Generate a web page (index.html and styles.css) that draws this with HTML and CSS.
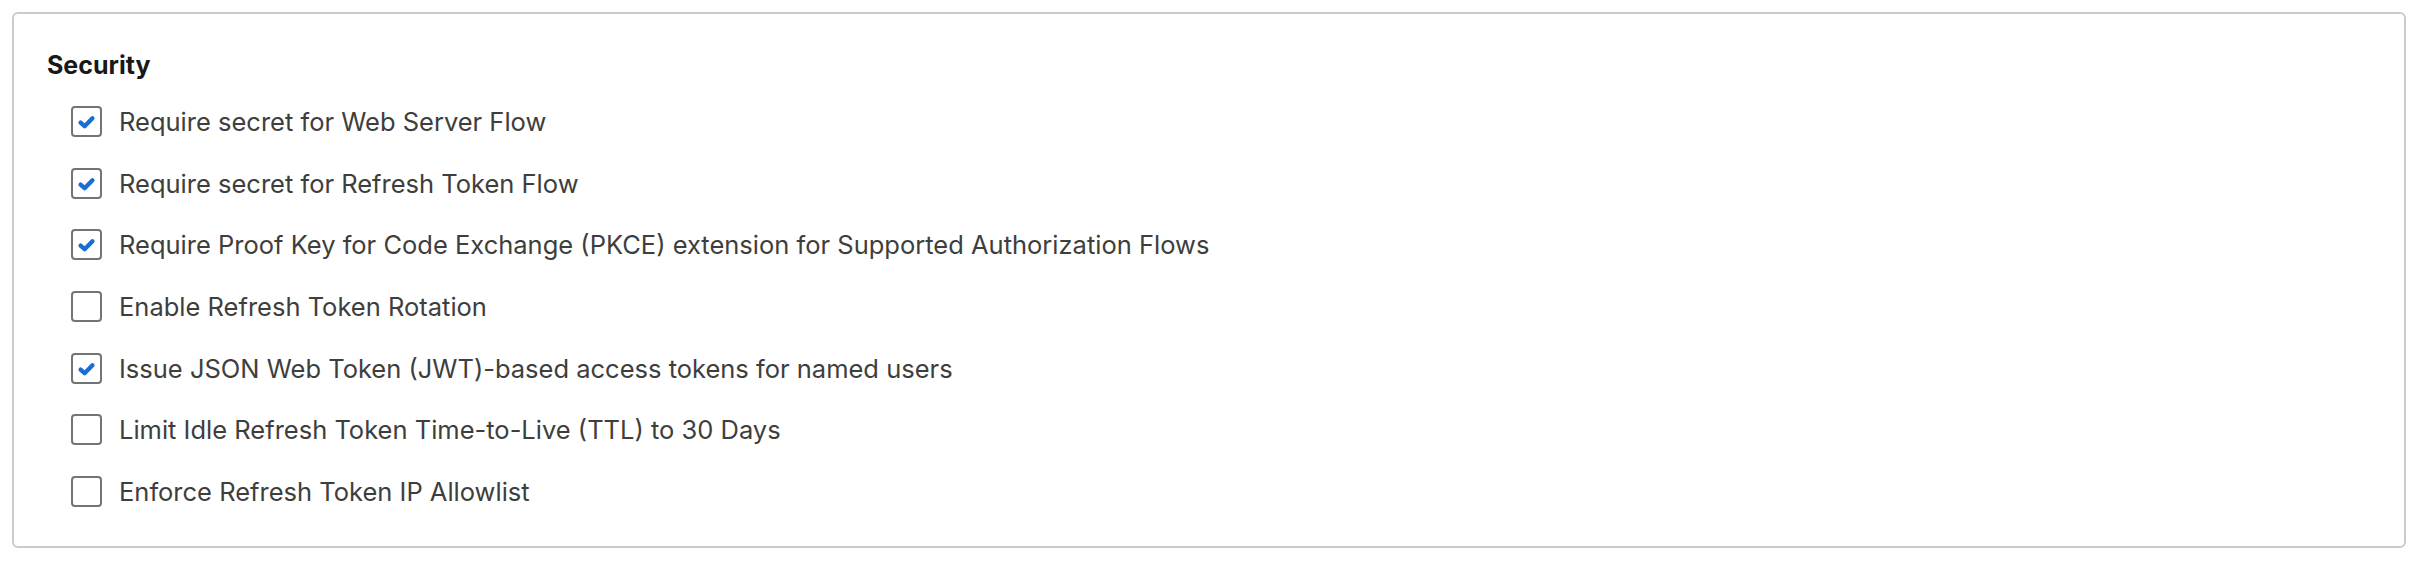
FILE: index.html
```html
<!DOCTYPE html>
<html lang="en">
<head>
<meta charset="utf-8">
<title>Security</title>
<link rel="stylesheet" href="styles.css">
</head>
<body>
  <section class="card">
    <h2 class="card-title">Security</h2>
    <ul class="option-list">
      <li class="option">
        <span class="box is-checked"><svg viewBox="0 0 20 20" class="tick"><path d="M5.6 10.8 L8.6 13.5 L14.4 7.6"/></svg></span>
        <span class="label">Require secret for Web Server Flow</span>
      </li>
      <li class="option">
        <span class="box is-checked"><svg viewBox="0 0 20 20" class="tick"><path d="M5.6 10.8 L8.6 13.5 L14.4 7.6"/></svg></span>
        <span class="label">Require secret for Refresh Token Flow</span>
      </li>
      <li class="option">
        <span class="box is-checked"><svg viewBox="0 0 20 20" class="tick"><path d="M5.6 10.8 L8.6 13.5 L14.4 7.6"/></svg></span>
        <span class="label">Require Proof Key for Code Exchange (PKCE) extension for Supported Authorization Flows</span>
      </li>
      <li class="option">
        <span class="box"></span>
        <span class="label">Enable Refresh Token Rotation</span>
      </li>
      <li class="option">
        <span class="box is-checked"><svg viewBox="0 0 20 20" class="tick"><path d="M5.6 10.8 L8.6 13.5 L14.4 7.6"/></svg></span>
        <span class="label">Issue JSON Web Token (JWT)-based access tokens for named users</span>
      </li>
      <li class="option">
        <span class="box"></span>
        <span class="label">Limit Idle Refresh Token Time-to-Live (TTL) to 30 Days</span>
      </li>
      <li class="option">
        <span class="box"></span>
        <span class="label">Enforce Refresh Token IP Allowlist</span>
      </li>
    </ul>
  </section>
</body>
</html>
```

FILE: styles.css
```css
html, body {
  background: #ffffff;
}

body {
  margin: 12px;
  font-family: Inter, "Liberation Sans", Arial, sans-serif;
}

.card {
  box-sizing: border-box;
  height: 536px;
  border: 2px solid #cbcbcb;
  border-radius: 6px;
  padding: 36px 33px 0 33px;
}

.card-title {
  margin: 0;
  font-size: 25px;
  line-height: 30px;
  font-weight: 700;
  color: #181818;
}

.option-list {
  list-style: none;
  margin: 0;
  padding: 26px 0 0 24px;
  display: flex;
  flex-direction: column;
  gap: 30.7px;
}

.option {
  display: flex;
  align-items: center;
  gap: 17px;
  height: 31px;
}

.box {
  box-sizing: border-box;
  flex: none;
  width: 31px;
  height: 31px;
  border: 2px solid #747474;
  border-radius: 4px;
  background: #ffffff;
  display: flex;
  align-items: center;
  justify-content: center;
}

.tick {
  width: 27px;
  height: 27px;
}

.tick path {
  fill: none;
  stroke: #1a6dd6;
  stroke-width: 3.2;
  stroke-linecap: round;
  stroke-linejoin: round;
}

.label {
  font-size: 25.5px;
  line-height: 31px;
  color: #3e3e3c;
  white-space: nowrap;
}
```
